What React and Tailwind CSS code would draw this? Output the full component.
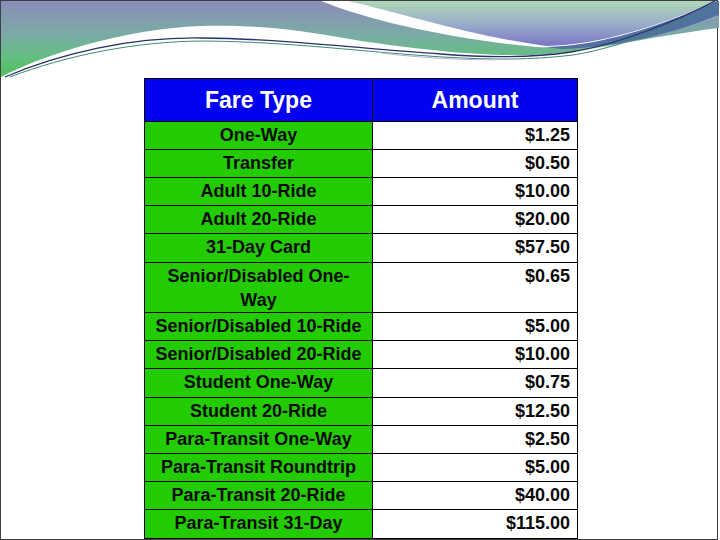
const fares = [
  { type: "One-Way", amount: "$1.25", h: "h-[28px]" },
  { type: "Transfer", amount: "$0.50", h: "h-[28px]" },
  { type: "Adult 10-Ride", amount: "$10.00", h: "h-[28px]" },
  { type: "Adult 20-Ride", amount: "$20.00", h: "h-[28px]" },
  { type: "31-Day Card", amount: "$57.50", h: "h-[29px]" },
  { type: "Senior/Disabled One-Way", amount: "$0.65", h: "h-[50px]" },
  { type: "Senior/Disabled 10-Ride", amount: "$5.00", h: "h-[28px]" },
  { type: "Senior/Disabled 20-Ride", amount: "$10.00", h: "h-[28px]" },
  { type: "Student One-Way", amount: "$0.75", h: "h-[29px]" },
  { type: "Student 20-Ride", amount: "$12.50", h: "h-[28px]" },
  { type: "Para-Transit One-Way", amount: "$2.50", h: "h-[28px]" },
  { type: "Para-Transit Roundtrip", amount: "$5.00", h: "h-[28px]" },
  { type: "Para-Transit 20-Ride", amount: "$40.00", h: "h-[28px]" },
  { type: "Para-Transit 31-Day", amount: "$115.00", h: "h-[29px]" },
];

// wavy header art of the slide template
const Swoosh = () => (
  <svg width="718" height="77" viewBox="0 0 718 77" className="block">
    <defs>
      <linearGradient id="bandA" x1="0" y1="0" x2="0" y2="1">
        <stop offset="0" stopColor="#8a8cba" />
        <stop offset="0.45" stopColor="#7aaca4" />
        <stop offset="0.75" stopColor="#62bf80" />
        <stop offset="1" stopColor="#4fc05a" />
      </linearGradient>
      <linearGradient id="bandB" x1="0" y1="0" x2="0" y2="1">
        <stop offset="0" stopColor="#b0d6b8" />
        <stop offset="0.5" stopColor="#9aaecb" />
        <stop offset="1" stopColor="#7c76c6" />
      </linearGradient>
    </defs>
    <path
      d="M0,0 H320 C370,20 450,38 535,46 C590,48 660,38 718,14 V27 C650,35 580,53 530,54 C480,55 430,50 360,40 C320,33 270,23 200,25 C120,28 40,55 0,76 Z"
      fill="url(#bandA)"
    />
    <path d="M347,0 C400,12 470,35 545,45 C600,44 660,24 716,0 Z" fill="url(#bandB)" />
    <path d="M545,46 C600,45 660,25 716,0 H718 V14 C660,38 600,47 560,48 Z" fill="#5270a2" />
    <path
      d="M4,76 C60,52 130,36 200,37 C290,38 360,48 440,53 C490,57 530,57 570,51 C620,43 680,18 714,0"
      fill="none"
      stroke="#2b3068"
      strokeWidth="1.3"
    />
    <path
      d="M9,76 C64,55 134,40 204,40 C292,41 362,51 442,56 C492,59 532,59 572,54 C622,46 682,21 718,3"
      fill="none"
      stroke="#3c8a72"
      strokeWidth="1"
    />
    <path
      d="M380,52 C430,58 480,60 520,58"
      fill="none"
      stroke="#b4b2dc"
      strokeWidth="1"
    />
  </svg>
);

const App = () => {
  return (
    <div className="w-[720px] h-[540px] bg-white overflow-hidden font-['Liberation_Sans',Arial,sans-serif]">
      <div className="w-[718px] h-[540px] border border-[#3e4046] bg-white flex flex-col">
        <Swoosh />
        <div className="ml-[143px] w-[434px] border-x border-b border-black font-bold">
          <div className="h-[43px] flex border-t border-black bg-[#0202f0] text-white text-[23px]">
            <div className="w-[228px] border-r border-black flex items-center justify-center">Fare Type</div>
            <div className="flex-1 flex items-center justify-center">Amount</div>
          </div>
          {fares.map((row) => (
            <div key={row.type} className={`${row.h} flex border-t border-black text-[18px] leading-[24px] text-[#0a0a0a]`}>
              <div className="w-[228px] border-r border-black bg-[#22cc00] px-2 pt-[1px] text-center">{row.type}</div>
              <div className="flex-1 bg-white pr-[7px] pt-[1px] text-right">{row.amount}</div>
            </div>
          ))}
        </div>
      </div>
    </div>
  );
};

export default App;
